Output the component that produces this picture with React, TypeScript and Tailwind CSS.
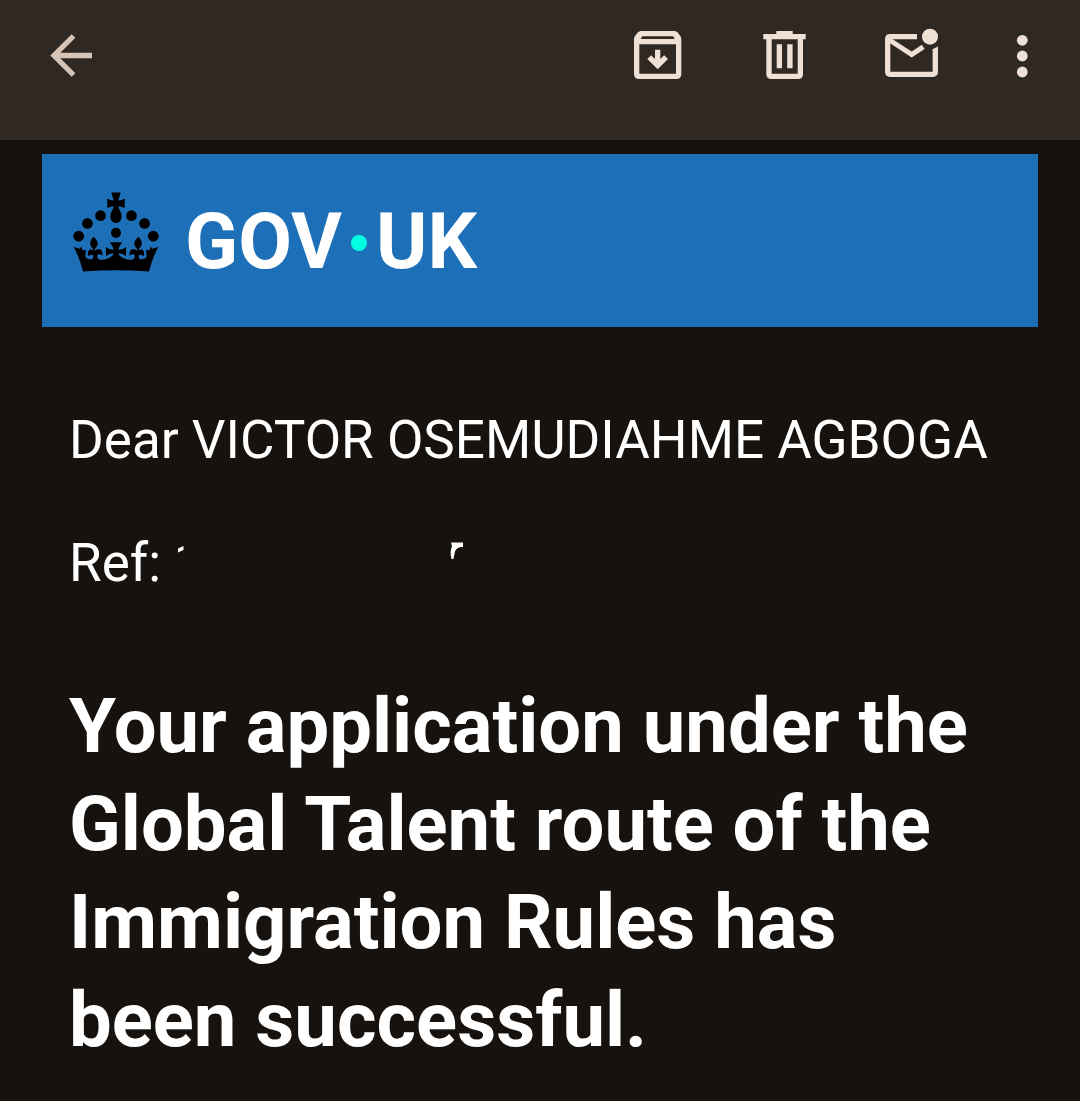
import type { ReactNode } from "react";

interface IconButtonProps {
  label: string;
  className?: string;
  children: ReactNode;
}

function IconButton({ label, className = "w-14 text-[#efe0d6]", children }: IconButtonProps) {
  return (
    <button type="button" aria-label={label} className={`h-14 shrink-0 ${className}`}>
      {children}
    </button>
  );
}

function BackIcon() {
  return (
    <svg viewBox="0 0 56 56" className="size-14" fill="none" stroke="currentColor" strokeWidth="5.3">
      <path d="M30.5 8 11 27.5 30.5 47M11 27.5H49" />
    </svg>
  );
}

function ArchiveIcon() {
  return (
    <svg viewBox="0 0 56 56" className="size-14" fill="currentColor">
      <path
        fillRule="evenodd"
        d="M11 3H44.5Q46.5 3 47.8 4.6L50.3 8Q51.3 9.3 51.3 11V46Q51.3 51 46.3 51H9Q4 51 4 46V11Q4 9.3 5 8L7.7 4.6Q9 3 11 3ZM12.2 8.3 10.7 11H44.7L43.2 8.3ZM9.3 16.3V45.7H46V16.3Z"
      />
      <path d="M25 21.7H30.3V31L34.2 27.3 38 31 27.7 41.3 17.3 31 21.1 27.3 25 31Z" />
    </svg>
  );
}

function DeleteIcon() {
  return (
    <svg viewBox="0 0 56 56" className="size-14" fill="currentColor">
      <path
        fillRule="evenodd"
        d="M19.3 3H35.7V6H48.7V11.3H46V46Q46 51 41 51H14.3Q9.3 51 9.3 46V11.3H6.3V6H19.3ZM14.7 11.3V45.7H40.7V11.3Z"
      />
      <path d="M19.7 16.3H25V40.3H19.7ZM30.2 16.3H35.6V40.3H30.2Z" />
    </svg>
  );
}

function UnreadIcon() {
  return (
    <svg viewBox="0 0 56 56" className="size-14" fill="none" stroke="currentColor" strokeWidth="5.3">
      <path d="M33 8.7H6.2Q3.7 8.7 3.7 11.2V43.8Q3.7 46.3 6.2 46.3H48.8Q51.3 46.3 51.3 43.8V21" />
      <path d="M4 11 27.7 26.5 39.2 18.8" strokeWidth="5" />
      <circle cx="46" cy="8.7" r="8" fill="currentColor" stroke="none" />
      <path d="M48.6 21.2 54 18.5V22H48.6Z" fill="currentColor" stroke="none" />
    </svg>
  );
}

function MoreIcon() {
  return (
    <svg viewBox="0 0 20 56" className="h-14 w-5" fill="currentColor">
      <circle cx="11.3" cy="12.3" r="5.4" />
      <circle cx="11.3" cy="28" r="5.4" />
      <circle cx="11.3" cy="44" r="5.4" />
    </svg>
  );
}

function Crown() {
  return (
    <svg viewBox="38 36 256 237" className="h-20 w-[86px] shrink-0" fill="#000" aria-hidden="true">
      <circle cx="55" cy="167" r="16" />
      <circle cx="81" cy="129" r="16" />
      <circle cx="120" cy="106" r="16" />
      <circle cx="212" cy="106" r="16" />
      <circle cx="251" cy="129" r="16" />
      <circle cx="277" cy="167" r="16" />
      <circle cx="166" cy="157" r="15" />
      {/* top cross and its orb */}
      <path d="M152 37H180L173 61Q182 61 192 55V83Q182 78 173 78L174 83Q183 98 183 109Q182 126 166 128Q150 126 149 109Q149 98 158 83L159 78Q150 78 140 83V55Q150 61 159 61Z" />
      {/* base with the central cross and the two fleurs-de-lis */}
      <path d="M40 199 58 204 64 198 65 209 76 207 75 229Q82 238 94 235Q101 232 98 224Q95 220 88 224L84 227Q79 213 87 207Q94 203 99 212L97 204Q88 197 89 187Q91 177 99 169Q109 177 112 188Q112 197 104 204L103 212Q109 203 119 206Q128 210 125 225Q118 219 111 222Q107 234 119 237Q143 238 158 222L157 218Q149 218 136 226V199Q148 208 159 207Q158 197 147 185H185Q174 197 173 207Q184 208 196 199V226Q183 218 175 218L174 222Q189 238 213 237Q225 234 221 222Q214 219 207 225Q204 210 213 206Q223 203 229 212L228 204Q220 197 220 188Q223 177 233 169Q241 177 243 187Q244 197 235 204L233 212Q238 203 245 207Q253 213 248 227L244 224Q237 220 234 224Q231 232 238 235Q250 238 257 229L256 207 267 209 268 198 274 204 292 199Q278 222 264 272Q166 265 68 272Q54 222 40 199Z" />
    </svg>
  );
}

export default function App() {
  return (
    <div className="min-h-screen bg-[#17120d] font-['Roboto',sans-serif] text-white">
      <header className="flex h-[140px] items-start justify-between bg-[#302822] pt-7 pr-[49px] pl-[43px]">
        <IconButton label="Back" className="w-14 text-[#d6c4b6]">
          <BackIcon />
        </IconButton>
        <div className="flex gap-[71px]">
          <IconButton label="Archive">
            <ArchiveIcon />
          </IconButton>
          <IconButton label="Delete">
            <DeleteIcon />
          </IconButton>
          <IconButton label="Mark as unread">
            <UnreadIcon />
          </IconButton>
          <IconButton label="More options" className="w-5 text-[#efe0d6]">
            <MoreIcon />
          </IconButton>
        </div>
      </header>

      <main className="px-[42px] pt-[14px]">
        <div className="flex h-[173px] items-start gap-[26px] bg-[#1d70b8] px-[31px] pt-[38px]">
          <Crown />
          <div className="flex items-center pt-1.5 text-[78px] leading-[88px] font-bold">
            <span>GOV</span>
            <span className="mx-[9px] mt-0.5 size-4 rounded-full bg-[#00ffe0]" />
            <span>UK</span>
          </div>
        </div>

        <div className="px-[27px] pt-[82px]">
          <p className="text-[53px] leading-[62px]">Dear VICTOR OSEMUDIAHME AGBOGA</p>
          <p className="mt-[61px] flex items-start text-[53px] leading-[62px]">
            Ref:
            {/* what is left of the redacted number */}
            <svg viewBox="0 0 290 24" className="mt-2 ml-4 h-6 w-[290px]" fill="#fff" aria-hidden="true">
              <path d="M1 8.500 6.500 6V10L1 12.500Z" />
              <path d="M274 2.500H286V7Q280 6.500 278 11.500L276.500 19H274.500Q272.500 12 275 6Z" />
            </svg>
          </p>
          <h1 className="mt-[83px] text-[76px] leading-[98px] font-bold">
            Your application under the Global Talent route of the Immigration Rules has been successful.
          </h1>
        </div>
      </main>
    </div>
  );
}
